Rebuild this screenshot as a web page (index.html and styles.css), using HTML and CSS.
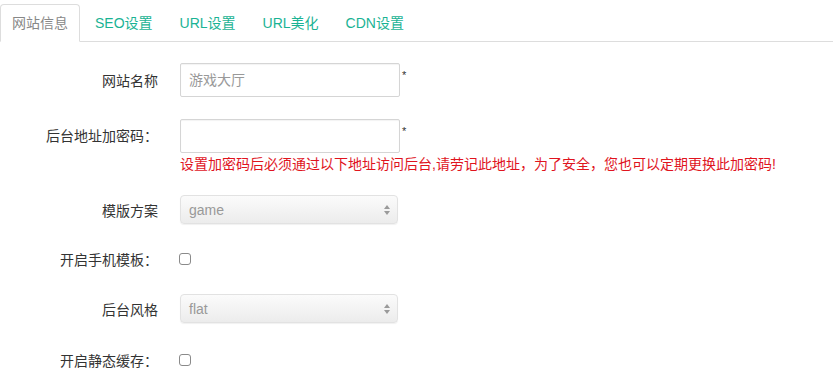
FILE: index.html
```html
<html>
    <head>
    <title>网站设置</title>
    <link rel="stylesheet" href="styles.css">
    </head>
    <body>

    <ul class="tabs">
        <li class="tab active">网站信息</li>
        <li class="tab">SEO设置</li>
        <li class="tab">URL设置</li>
        <li class="tab">URL美化</li>
        <li class="tab">CDN设置</li>
    </ul>

    <form class="settings">
        <div class="row row-name">
            <label class="label">网站名称</label>
            <input class="text-input" type="text" placeholder="游戏大厅">
            <span class="required">*</span>
        </div>

        <div class="row row-key">
            <label class="label">后台地址加密码：</label>
            <div class="field">
                <div class="field-line">
                    <input class="text-input" type="text">
                    <span class="required">*</span>
                </div>
                <p class="help">设置加密码后必须通过以下地址访问后台,请劳记此地址，为了安全，您也可以定期更换此加密码!</p>
            </div>
        </div>

        <div class="row row-theme">
            <label class="label">模版方案</label>
            <div class="select">
                <span>game</span>
                <svg width="8" height="12" viewBox="0 0 8 12"><path d="M4 1 L7 5 L1 5 Z M4 11 L7 7 L1 7 Z" fill="#9a9a9a"/></svg>
            </div>
        </div>

        <div class="row row-check">
            <label class="label">开启手机模板：</label>
            <input class="check" type="checkbox">
        </div>

        <div class="row row-style">
            <label class="label">后台风格</label>
            <div class="select">
                <span>flat</span>
                <svg width="8" height="12" viewBox="0 0 8 12"><path d="M4 1 L7 5 L1 5 Z M4 11 L7 7 L1 7 Z" fill="#9a9a9a"/></svg>
            </div>
        </div>

        <div class="row row-check2">
            <label class="label">开启静态缓存：</label>
            <input class="check" type="checkbox">
        </div>
    </form>

    </body>
</html>
```

FILE: styles.css
```css
body {
  font-family: "Liberation Sans", "Noto Sans CJK SC", sans-serif;
  font-size: 14px;
  color: #333333;
  margin: 0;
  padding: 0;
  background-color: #ffffff;
}

.tabs {
  list-style: none;
  margin: 0;
  padding: 4px 0 0 0;
  display: flex;
  border-bottom: 1px solid #dddddd;
}

.tab {
  height: 36px;
  line-height: 36px;
  padding: 0 11px;
  margin-right: 3px;
  margin-bottom: -1px;
  color: #1ab394;
  border: 1px solid transparent;
  border-radius: 4px 4px 0 0;
}

.tab.active {
  color: #888888;
  background-color: #ffffff;
  border-color: #dddddd;
  border-bottom-color: #ffffff;
}

.settings {
  margin: 0;
  padding: 21px 0 0 0;
}

.row {
  display: flex;
  align-items: center;
}

.row-key {
  align-items: flex-start;
  margin-top: 22px;
}

.row-theme {
  margin-top: 23px;
}

.row-check {
  margin-top: 25px;
  height: 20px;
}

.row-style {
  margin-top: 25px;
}

.row-check2 {
  margin-top: 27px;
  height: 20px;
}

.label {
  width: 158px;
  margin-right: 22px;
  text-align: right;
  flex-shrink: 0;
}

.row-key .label {
  line-height: 34px;
}

.field-line {
  display: flex;
}

.text-input {
  width: 220px;
  height: 34px;
  box-sizing: border-box;
  margin: 0;
  padding: 0 8px;
  border: 1px solid #d5d5d5;
  border-radius: 2px;
  box-shadow: inset 0 1px 1px rgba(0, 0, 0, 0.05);
  font-family: "Liberation Sans", "Noto Sans CJK SC", sans-serif;
  font-size: 14px;
  color: #555555;
  outline: none;
}

.text-input::placeholder {
  color: #999999;
}

.required {
  font-size: 11px;
  margin: 6px 0 0 2px;
  align-self: flex-start;
}

.help {
  margin: 3px 0 0 0;
  line-height: 16px;
  color: #e0141e;
  white-space: nowrap;
}

.select {
  width: 218px;
  height: 29px;
  box-sizing: border-box;
  display: flex;
  align-items: center;
  justify-content: space-between;
  padding: 0 6px 0 8px;
  border: 1px solid #e2e2e2;
  border-radius: 4px;
  background: linear-gradient(#fbfbfb, #ececec);
  box-shadow: 0 1px 1px rgba(0, 0, 0, 0.06);
  color: #999999;
}

.check {
  -webkit-appearance: none;
  appearance: none;
  width: 12px;
  height: 12px;
  margin: 0 0 0 -1px;
  border: 1px solid #8a8a8a;
  border-radius: 3px;
  background-color: #ffffff;
}
```
